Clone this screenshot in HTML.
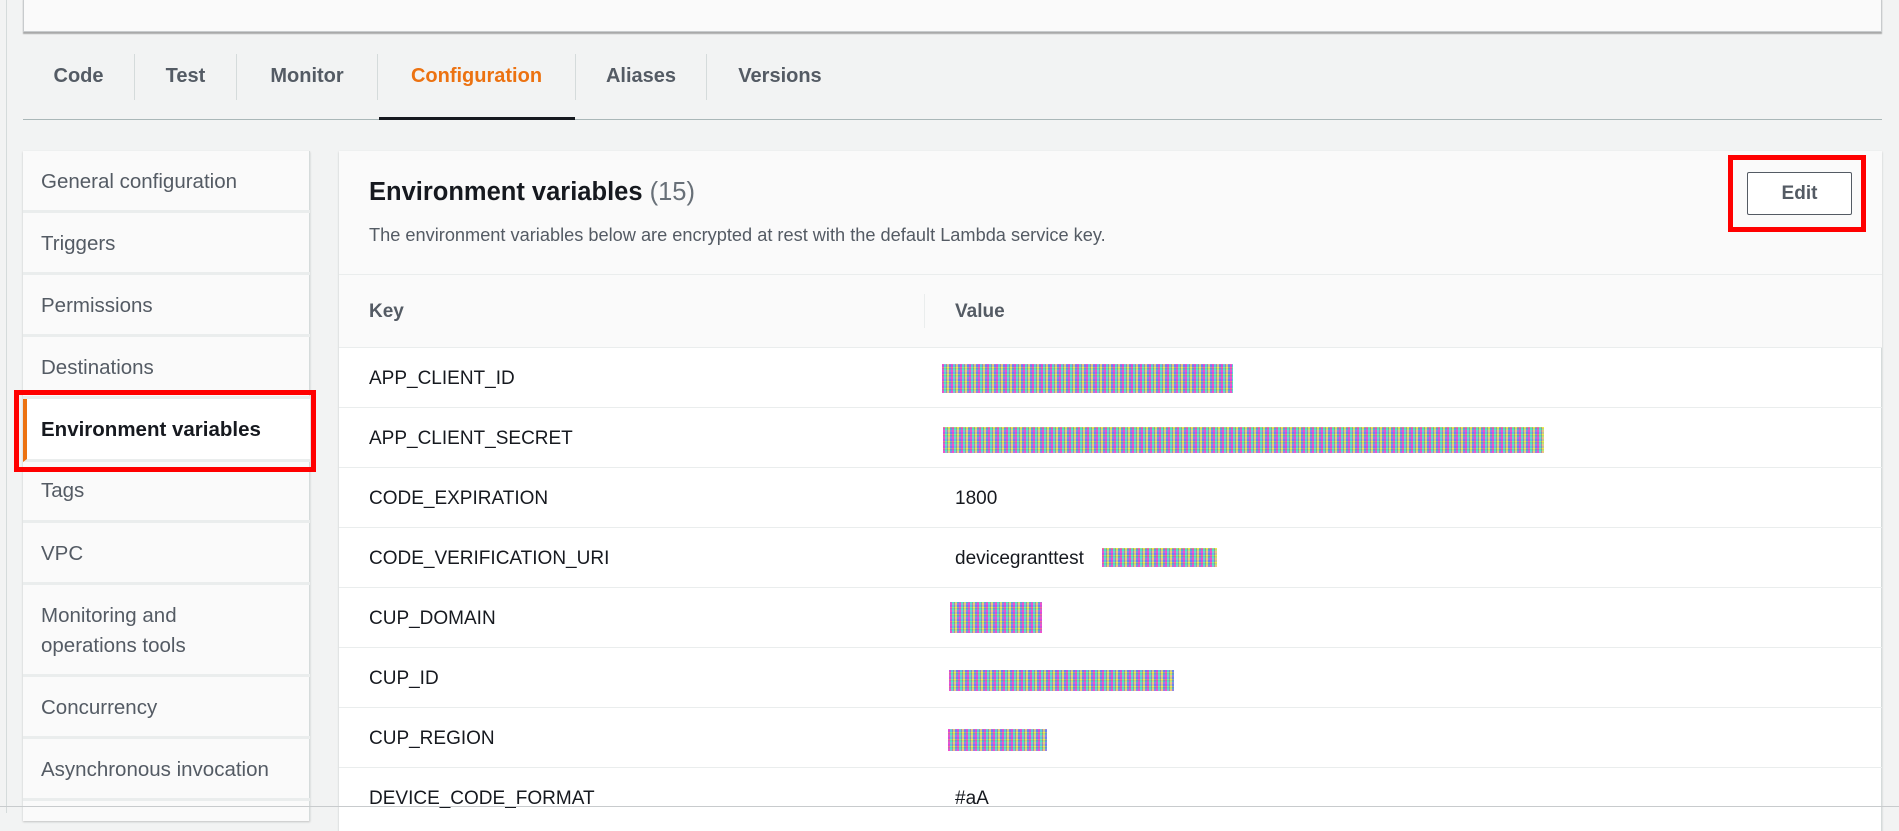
<!DOCTYPE html>
<html><head><meta charset="utf-8"><style>
*{box-sizing:border-box;margin:0;padding:0}
body{width:1899px;height:813px;overflow:hidden;background:#f2f3f3;font-family:"Liberation Sans",sans-serif;position:relative;color:#16191f}
.abs{position:absolute}
.topbox{left:23px;top:-2px;width:1859px;height:34px;background:#fafafa;border:1px solid #c8cbcd;box-shadow:0 2px 1px rgba(0,0,0,.3)}
.vline{left:6px;top:0;width:1px;height:813px;background:#d5dbdb}
.tab{top:54px;height:64px;line-height:44px;font-size:20px;font-weight:bold;color:#545b64;text-align:center}
.tsep{top:54px;width:1px;height:46px;background:#d5dbdb}
.side{left:23px;top:151px;width:287px;height:670px;background:#fafafa;border-right:1px solid #d5dbdb;box-shadow:0 1px 2px rgba(0,0,0,.2)}
.si{position:absolute;left:0;width:287px;border-bottom:3px solid #eaeded;font-size:20.5px;color:#545b64;padding-left:18px}
.main{left:339px;top:151px;width:1543px;height:680px;background:#fff;border-right:1px solid #d5dbdb;box-shadow:0 1px 2px rgba(0,0,0,.2)}
.row{position:absolute;left:339px;width:1543px;height:60px;border-bottom:1px solid #eaeded;font-size:19px}
.row .k{position:absolute;left:30px;top:20px}
.row .v{position:absolute;left:616px;top:20px}
.nz{position:absolute;background:
repeating-linear-gradient(90deg,rgba(255,0,200,.5) 0 2px,rgba(0,255,200,.45) 2px 4px,rgba(120,120,120,.5) 4px 5px,rgba(255,255,0,.4) 5px 7px,rgba(0,80,255,.35) 7px 9px),
repeating-linear-gradient(0deg,#e0a0d8 0 2px,#80e0c8 2px 3px,#b0b0b0 3px 4px,#e8e070 4px 5px,#a0a0f0 5px 7px)}
</style></head><body>
<div class="abs vline"></div>
<div class="abs topbox"></div>
<div class="abs" style="left:23px;top:119px;width:1859px;height:1px;background:#aab7b8"></div>
<div class="abs tab" style="left:23px;width:111px">Code</div>
<div class="abs tsep" style="left:134px"></div>
<div class="abs tab" style="left:135px;width:101px">Test</div>
<div class="abs tsep" style="left:236px"></div>
<div class="abs tab" style="left:237px;width:140px">Monitor</div>
<div class="abs tsep" style="left:377px"></div>
<div class="abs tab" style="left:378px;width:197px;color:#ec7211">Configuration</div>
<div class="abs tsep" style="left:575px"></div>
<div class="abs tab" style="left:576px;width:130px">Aliases</div>
<div class="abs tsep" style="left:706px"></div>
<div class="abs tab" style="left:707px;width:146px">Versions</div>
<div class="abs" style="left:379px;top:117px;width:196px;height:3px;background:#16191f"></div>

<div class="abs side">
<div class="si" style="top:0;height:62px;line-height:61px">General configuration</div>
<div class="si" style="top:62px;height:62px;line-height:61px">Triggers</div>
<div class="si" style="top:124px;height:62px;line-height:61px">Permissions</div>
<div class="si" style="top:186px;height:62px;line-height:61px">Destinations</div>
<div class="si" style="top:248px;height:63px;line-height:61px;background:#fff;font-weight:bold;color:#16191f;border-left:4px solid #ec7211;padding-left:14px">Environment variables</div>
<div class="si" style="top:311px;height:61px;line-height:58px">Tags</div>
<div class="si" style="top:372px;height:62px;line-height:61px">VPC</div>
<div class="si" style="top:434px;height:92px;line-height:30px;padding-top:16px">Monitoring and<br>operations tools</div>
<div class="si" style="top:526px;height:62px;line-height:61px">Concurrency</div>
<div class="si" style="top:588px;height:62px;line-height:61px">Asynchronous invocation</div>
</div>
<div class="abs" style="left:14px;top:390px;width:302px;height:82px;border:5px solid #f00"></div>

<div class="abs main"></div>
<div class="abs" style="left:339px;top:151px;width:1543px;height:124px;background:#fafafa;border-bottom:1px solid #eaeded"></div>
<div class="abs" style="left:369px;top:178px;font-size:25.5px;font-weight:bold">Environment variables <span style="font-weight:normal;color:#687078">(15)</span></div>
<div class="abs" style="left:369px;top:225px;font-size:18.2px;color:#545b64">The environment variables below are encrypted at rest with the default Lambda service key.</div>
<div class="abs" style="left:1747px;top:172px;width:105px;height:43px;border:1px solid #545b64;border-radius:2px;background:#fff;font-size:19px;font-weight:bold;color:#545b64;text-align:center;line-height:41px">Edit</div>
<div class="abs" style="left:1728px;top:155px;width:138px;height:77px;border:5px solid #f00"></div>

<div class="abs" style="left:339px;top:275px;width:1543px;height:73px;background:#fafafa;border-bottom:1px solid #eaeded"></div>
<div class="abs" style="left:369px;top:301px;font-size:19px;font-weight:bold;color:#545b64">Key</div>
<div class="abs" style="left:924px;top:294px;width:1px;height:34px;background:#eaeded"></div>
<div class="abs" style="left:955px;top:301px;font-size:19px;font-weight:bold;color:#545b64">Value</div>

<div class="row" style="top:348px"><span class="k">APP_CLIENT_ID</span></div>
<div class="row" style="top:408px"><span class="k">APP_CLIENT_SECRET</span></div>
<div class="row" style="top:468px"><span class="k">CODE_EXPIRATION</span><span class="v">1800</span></div>
<div class="row" style="top:528px"><span class="k">CODE_VERIFICATION_URI</span><span class="v">devicegranttest</span></div>
<div class="row" style="top:588px"><span class="k">CUP_DOMAIN</span></div>
<div class="row" style="top:648px"><span class="k">CUP_ID</span></div>
<div class="row" style="top:708px"><span class="k">CUP_REGION</span></div>
<div class="row" style="top:768px;border-bottom:none"><span class="k">DEVICE_CODE_FORMAT</span><span class="v">#aA</span></div>
<div class="abs" style="left:0;top:806px;width:1899px;height:1px;background:#c8cbcd"></div>

<div class="nz" style="left:942px;top:364px;width:291px;height:29px"></div>
<div class="nz" style="left:943px;top:427px;width:601px;height:26px"></div>
<div class="nz" style="left:1102px;top:548px;width:115px;height:19px"></div>
<div class="nz" style="left:950px;top:602px;width:92px;height:31px"></div>
<div class="nz" style="left:949px;top:670px;width:225px;height:21px"></div>
<div class="nz" style="left:948px;top:729px;width:99px;height:22px"></div>
</body></html>
